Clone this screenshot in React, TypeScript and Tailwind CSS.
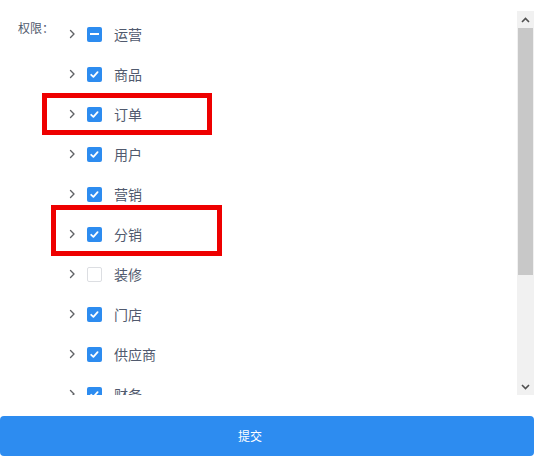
import React from "react";

type State = "checked" | "indeterminate" | "unchecked";

const items: { label: string; state: State }[] = [
  { label: "运营", state: "indeterminate" },
  { label: "商品", state: "checked" },
  { label: "订单", state: "checked" },
  { label: "用户", state: "checked" },
  { label: "营销", state: "checked" },
  { label: "分销", state: "checked" },
  { label: "装修", state: "unchecked" },
  { label: "门店", state: "checked" },
  { label: "供应商", state: "checked" },
  { label: "财务", state: "checked" },
];

function Chevron() {
  return (
    <svg width="12" height="12" viewBox="0 0 12 12" className="shrink-0">
      <path d="M4.5 2.5 L8 6 L4.5 9.5" fill="none" stroke="#606266" strokeWidth="1.4" strokeLinecap="round" strokeLinejoin="round" />
    </svg>
  );
}

function Box({ state }: { state: State }) {
  if (state === "unchecked") {
    return <div className="w-[15px] h-[15px] rounded-[2px] border border-[#dcdee2] bg-white shrink-0" />;
  }
  return (
    <div className="w-[15px] h-[15px] rounded-[2px] bg-[#2d8cf0] flex items-center justify-center shrink-0">
      {state === "checked" ? (
        <svg width="15" height="15" viewBox="0 0 15 15">
          <path d="M4.2 7.8 L6.4 9.8 L10.6 5.2" fill="none" stroke="#fff" strokeWidth="1.8" strokeLinecap="round" strokeLinejoin="round" />
        </svg>
      ) : (
        <div className="w-[9px] h-[2px] bg-white" />
      )}
    </div>
  );
}

export default function App() {
  return (
    <div
      className="relative w-[542px] h-[468px] bg-white overflow-hidden"
      style={{ fontFamily: '"Microsoft YaHei", "Noto Sans CJK SC", "Noto Sans", sans-serif' }}
    >
      <div className="w-[534px] pt-[11px]">
        <div className="flex h-[384px]">
          <div className="flex-1 overflow-hidden flex items-start">
            <div className="w-[66px] pl-[18px] pt-[9px] text-[12px] leading-[16px] text-[#515a6e] shrink-0">权限：</div>
            <div className="flex flex-col pt-[3px]">
              {items.map((it) => (
                <div key={it.label} className="h-[40px] flex items-center shrink-0">
                  <Chevron />
                  <div className="w-[9px]" />
                  <Box state={it.state} />
                  <span className="ml-[12px] text-[14px] leading-[20px] text-[#515a6e]">{it.label}</span>
                </div>
              ))}
            </div>
          </div>
          <div className="w-[17px] bg-[#f1f1f1] flex flex-col shrink-0">
            <div className="h-[17px] flex items-center justify-center">
              <svg width="9" height="6" viewBox="0 0 9 6">
                <path d="M1 5 L4.5 1.5 L8 5" fill="none" stroke="#505050" strokeWidth="1.6" />
              </svg>
            </div>
            <div className="h-[247px] mx-[1px] bg-[#c8c8c8]" />
            <div className="flex-1" />
            <div className="h-[17px] flex items-center justify-center">
              <svg width="9" height="6" viewBox="0 0 9 6">
                <path d="M1 1 L4.5 4.5 L8 1" fill="none" stroke="#505050" strokeWidth="1.6" />
              </svg>
            </div>
          </div>
        </div>
        <div className="mt-[21px] h-[40px] rounded-[4px] bg-[#2d8cf0] flex items-center justify-center pr-[34px] text-white text-[12px]">
          提交
        </div>
      </div>
      <div className="absolute left-[42px] top-[93px] w-[170px] h-[42px] border-[5px] border-[#ee0000]" />
      <div className="absolute left-[51px] top-[205px] w-[171px] h-[51px] border-[5px] border-[#ee0000]" />
    </div>
  );
}
